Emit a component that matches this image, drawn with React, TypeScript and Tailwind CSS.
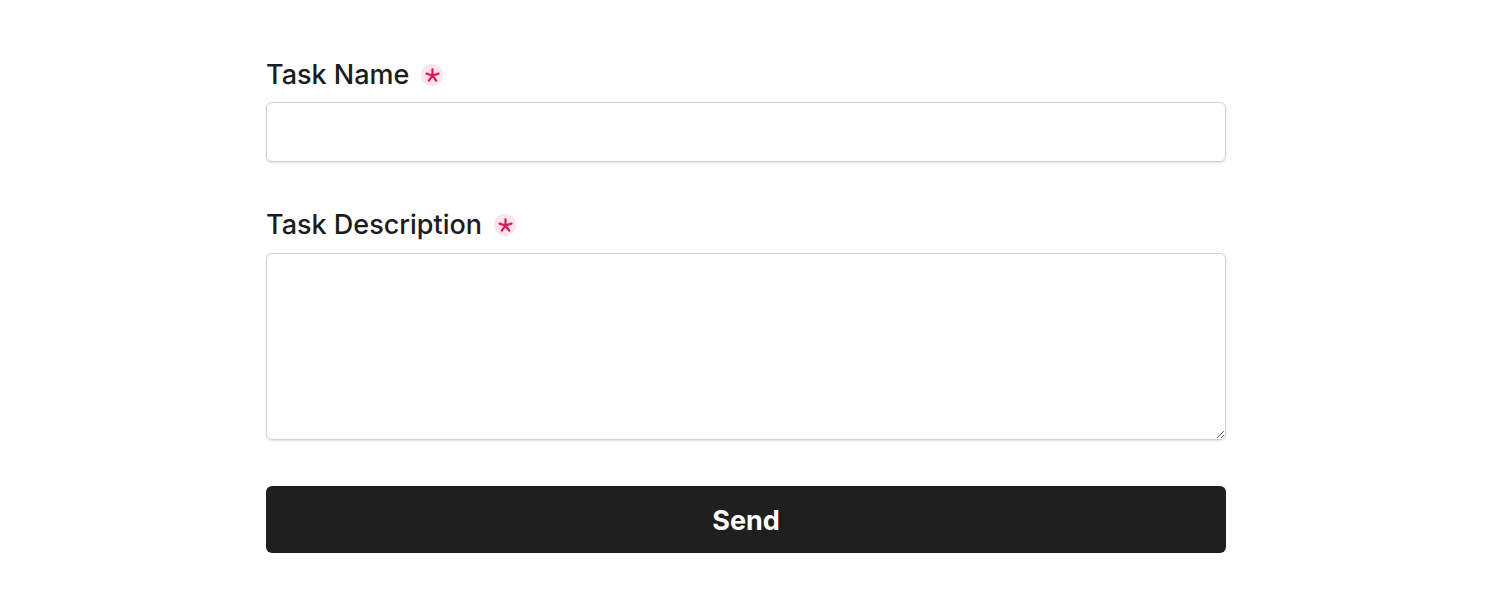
import { useState } from 'react';

const RequiredMark = () => (
  <span className="ml-[12px] inline-flex h-[22px] w-[22px] items-center justify-center rounded-full bg-[#fde4ec]">
    <svg viewBox="0 0 24 24" className="h-[15px] w-[15px] text-[#e0185a]" stroke="currentColor" strokeWidth="3.6" strokeLinecap="round">
      <path d="M12 12V2M12 12L21.5 8.9M12 12L17.9 20.1M12 12L6.1 20.1M12 12L2.5 8.9" />
    </svg>
  </span>
);

export default function App() {
  const [name, setName] = useState('');
  const [description, setDescription] = useState('');

  return (
    <div className="min-h-[615px] bg-white font-['Inter','Noto_Sans',sans-serif]">
      <form onSubmit={(e) => e.preventDefault()} className="ml-[266px] w-[960px] pt-[59px]">
        <div className="mb-[47px]">
          <label className="mb-[11px] flex h-8 items-center text-[27px] font-medium text-[#1c1c1c]">
            Task Name
            <RequiredMark />
          </label>
          <input
            value={name}
            onChange={(e) => setName(e.target.value)}
            className="block h-[60px] w-full rounded-md border border-[#cdd0dc] px-4 text-lg shadow-[0_1px_2px_rgba(0,0,0,0.12)] outline-none"
          />
        </div>
        <div className="mb-[46px]">
          <label className="mb-3 flex h-8 items-center text-[27px] font-medium text-[#1c1c1c]">
            Task Description
            <RequiredMark />
          </label>
          <textarea
            value={description}
            onChange={(e) => setDescription(e.target.value)}
            className="block h-[187px] w-full rounded-md border border-[#cdd0dc] px-4 py-3 text-lg shadow-[0_1px_2px_rgba(0,0,0,0.12)] outline-none"
          />
        </div>
        <button type="submit" className="block h-[67px] w-full rounded-md bg-[#1f1f1f] pt-[3px] text-[27px] font-bold text-white">
          Send
        </button>
      </form>
    </div>
  );
}
